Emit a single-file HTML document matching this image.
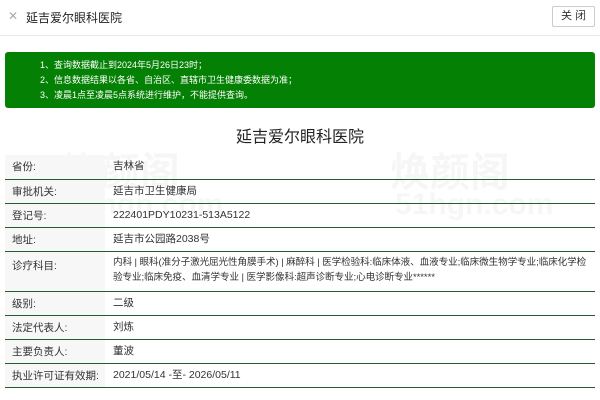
<!DOCTYPE html>
<html><head><meta charset="utf-8"><style>
*{margin:0;padding:0;box-sizing:border-box}
body{width:600px;height:400px;overflow:hidden;background:#fff;font-family:"Liberation Sans","Noto Sans CJK SC",sans-serif;color:#333;position:relative}
.hdr{height:36px;border-bottom:1px solid #e8e8e8;position:relative}
.x{position:absolute;left:8px;top:9px;font-size:12px;color:#aaa}
.ht{position:absolute;left:26px;top:9px;font-size:12px;color:#222}
.btn{position:absolute;right:5px;top:6px;width:43px;height:21px;border:1px solid #ccc;font-size:11px;text-align:center;line-height:19px;border-radius:2px}
.g{position:absolute;left:5px;top:52px;width:590px;height:56px;background:#048004;border-radius:3px;color:#fff;font-size:9px;padding:6px 0 0 35px;line-height:15px}
h1{position:absolute;top:123px;left:0;width:600px;text-align:center;font-size:16px;font-weight:normal;color:#222}
table{position:absolute;left:5px;top:155px;width:590px;border-collapse:collapse;font-size:10.5px}
td{border-bottom:1.5px solid #1e5e30;height:24px;vertical-align:middle}
td.l{width:100px;background:#f7f7f7;padding-left:7px}
td.v{padding-left:8px;line-height:15px}
.wm{position:absolute;font-size:40px;color:rgba(0,0,0,0.035);font-weight:bold}
</style></head><body>
<div class="hdr"><span class="x">✕</span><span class="ht">延吉爱尔眼科医院</span><span class="btn">关 闭</span></div>
<div class="g">1、查询数据截止到2024年5月26日23时；<br>2、信息数据结果以各省、自治区、直辖市卫生健康委数据为准；<br>3、凌晨1点至凌晨5点系统进行维护，不能提供查询。</div>
<h1>延吉爱尔眼科医院</h1>
<div class="wm" style="left:60px;top:140px">焕颜阁</div>
<div class="wm" style="left:65px;top:188px;font-size:30px">51hgn.com</div>
<div class="wm" style="left:390px;top:140px">焕颜阁</div>
<div class="wm" style="left:395px;top:188px;font-size:30px">51hgn.com</div>
<table>
<tr><td class="l">省份:</td><td class="v">吉林省</td></tr>
<tr><td class="l">审批机关:</td><td class="v">延吉市卫生健康局</td></tr>
<tr><td class="l">登记号:</td><td class="v">222401PDY10231-513A5122</td></tr>
<tr><td class="l">地址:</td><td class="v">延吉市公园路2038号</td></tr>
<tr><td class="l" style="height:40px;vertical-align:top;padding-top:6px">诊疗科目:</td><td class="v" style="height:40px;padding-top:3px;vertical-align:top;font-size:9.6px;letter-spacing:-0.1px">内科 | 眼科(准分子激光屈光性角膜手术) | 麻醉科 | 医学检验科:临床体液、血液专业;临床微生物学专业;临床化学检验专业;临床免疫、血清学专业 | 医学影像科:超声诊断专业;心电诊断专业******</td></tr>
<tr><td class="l">级别:</td><td class="v">二级</td></tr>
<tr><td class="l">法定代表人:</td><td class="v">刘炼</td></tr>
<tr><td class="l">主要负责人:</td><td class="v">董波</td></tr>
<tr><td class="l">执业许可证有效期:</td><td class="v">2021/05/14 -至- 2026/05/11</td></tr>
</table>
</body></html>
